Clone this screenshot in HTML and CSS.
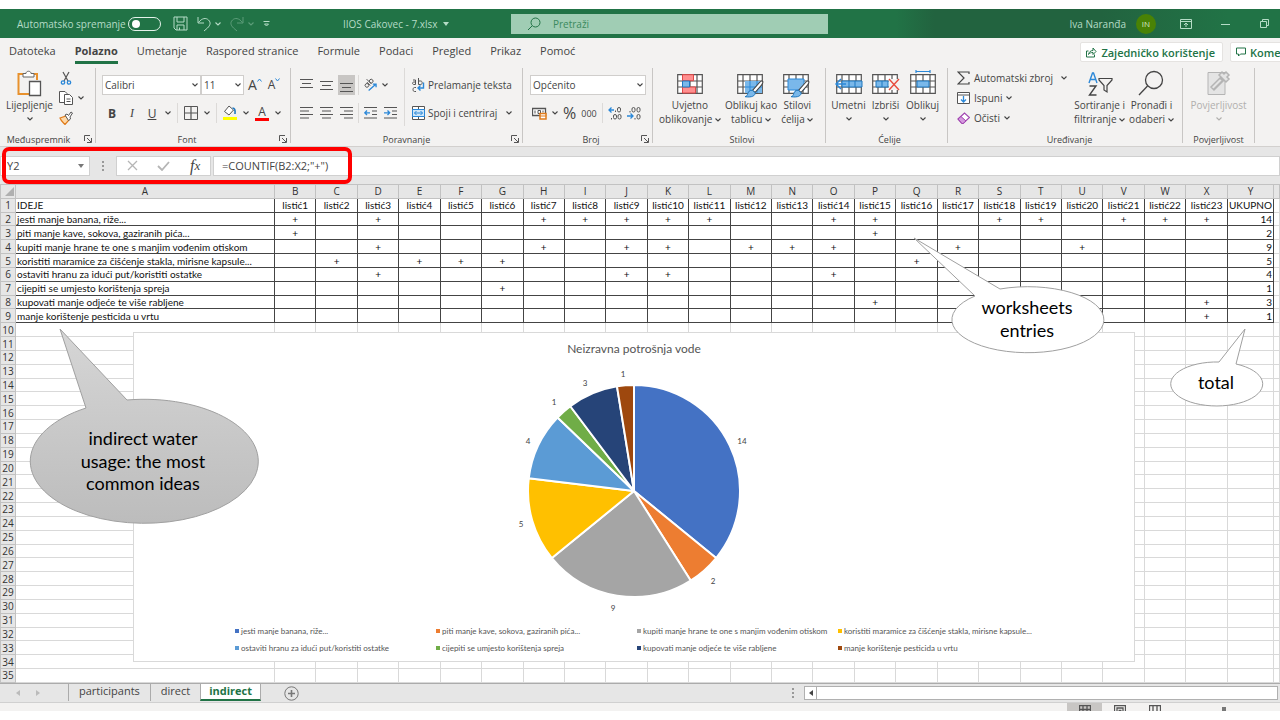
FILE: index.html
```html
<!DOCTYPE html>
<html lang="hr">
<head>
    <meta charset="UTF-8">
    <meta name="viewport" content="width=device-width, initial-scale=1.0">
    <title>IIOS Cakovec - 7.xlsx</title>
    <link rel="stylesheet" href="styles.css">
</head>
<body>
    <!-- Simboli koji se ponavljaju -->
    <svg class="defs" aria-hidden="true">
        <symbol id="chev" viewBox="0 0 6 4"><path d="M.5.5 3 3 5.5.5" fill="none" stroke="currentColor" stroke-width="1.1"/></symbol>
        <symbol id="launch" viewBox="0 0 8 8"><path d="M.5 6V.5H6M3 3l4 4M7.5 3v4.5H3" fill="none" stroke="#555"/></symbol>
        <symbol id="grid" viewBox="0 0 26 20"><path d="M.7.7h24.6v18.6H.7zM.7 7h24.6M.7 13h24.6M6 .7v18.6M13 .7v18.6M20 .7v18.6" fill="#fff" stroke="#555" stroke-width="1.2"/></symbol>
        <symbol id="brush" viewBox="0 0 20 18"><path d="M18.5 1.2c1 .7.5 1.800-1 4L11 12.500 8.500 10.500 15.500 2.500c1.300-1.400 2.200-1.900 3-1.300z" fill="#fff" stroke="#444" stroke-width="1.1"/><path d="M8.300 10.300l2.900 2.400c0 3-3 5-10.200 4 2-.5 2.200-1.300 2.800-3.200.6-2 2.200-3.500 4.500-3.200z" fill="#7ab8ea" stroke="#1f78c0"/></symbol>
    </svg>

    <div class="app">
        <header class="titlebar">
            <div class="quick">
                <label for="autosave">Automatsko spremanje</label>
                <input type="checkbox" id="autosave" class="toggle">
                <button class="save" aria-label="Spremi"><svg width="15" height="15" viewBox="0 0 15 15"><path d="M1 1h13v13H3l-2-2zM4 1v5h7V1M4 14V9h7v5M6.5 11.5v2.5" /></svg></button>
                <button aria-label="Poništi"><svg width="14" height="16" viewBox="0 0 14 16"><path d="M1 1v6h6M1.5 6.5C5 2 9 1.5 11.5 4s2 5-1 8l-3.500 3"/></svg></button>
                <button class="more" aria-label="Više"><svg class="chev"><use href="#chev"/></svg></button>
                <button class="dim" aria-label="Ponovi"><svg width="14" height="16" viewBox="0 0 14 16"><path d="M13 1v6H7M12.5 6.5C9 2 5 1.5 2.5 4s-2 5 1 8L7 15"/></svg></button>
                <button class="dim more" aria-label="Više"><svg class="chev"><use href="#chev"/></svg></button>
                <button class="custom" aria-label="Prilagodi"><svg width="7" height="6" viewBox="0 0 7 6"><path d="M.5.5h6M1.5 3l2 2 2-2z"/></svg></button>
            </div>
            <button class="filename">IIOS Cakovec - 7.xlsx <svg width="6" height="4" viewBox="0 0 6 4"><path d="M0 0h6L3 4z"/></svg></button>
            <div class="search">
                <svg width="14" height="14" viewBox="0 0 14 14"><circle cx="8.5" cy="5.5" r="4.5"/><path d="M5.2 8.8 1 13"/></svg>
                <input type="search" placeholder="Pretraži" aria-label="Pretraži">
            </div>
            <div class="account">
                <span>Iva Naranđa</span>
                <span class="avatar">IN</span>
                <button aria-label="Mogućnosti vrpce"><svg width="12" height="10" viewBox="0 0 12 10"><path d="M.5.5h11v9H.5zM.5 2.5h11M6 8V4M4 6l2-2 2 2"/></svg></button>
                <button aria-label="Minimiziraj"><svg width="10" height="10" viewBox="0 0 10 10"><path d="M0 5.5h9"/></svg></button>
                <button aria-label="Vrati"><svg width="10" height="10" viewBox="0 0 10 10"><path d="M.5 2.5h6v6h-6zM2.5 2.5v-2h6v6h-2"/></svg></button>
            </div>
        </header>

        <nav class="tabs">
            <a href="#">Datoteka</a>
            <a href="#" class="active">Polazno</a>
            <a href="#">Umetanje</a>
            <a href="#">Raspored stranice</a>
            <a href="#">Formule</a>
            <a href="#">Podaci</a>
            <a href="#">Pregled</a>
            <a href="#">Prikaz</a>
            <a href="#">Pomoć</a>
            <button class="share"><svg width="11" height="11" viewBox="0 0 11 11"><path d="M2.5 4H.5v6h8V7.5M2.5 7.5C3 5 4.5 3.5 7 3.5V1l3 3.5-3 3V5.5c-2 0-3.5.5-4.5 2z"/></svg>Zajedničko korištenje</button>
            <button class="comments"><svg width="10" height="10" viewBox="0 0 10 10"><path d="M.5 1h9v6H4.500l-2 2V7h-2z"/></svg>Komentari</button>
        </nav>

        <div class="ribbon">
            <section class="group clipboard">
                <div class="tools">
                    <button class="big"><svg width="26" height="28" viewBox="0 0 26 28"><path d="M6 4H1.500v20H12M17 4h3v6" fill="none" stroke="#e8912d" stroke-width="2"/><path d="M6 7V3.500h3c0-3 5-3 5 0h3V7z" fill="#fff" stroke="#666"/><path d="M12.500 11.500h11v14h-11z" fill="#fff" stroke="#555" stroke-width="1.3"/></svg>
                        <span>Lijepljenje</span><svg class="chev"><use href="#chev"/></svg></button>
                    <div class="stack">
                        <button aria-label="Izreži"><svg width="14" height="14" viewBox="0 0 14 14" fill="none"><path d="M4 1l5 9M10 1L5 10" stroke="#555" stroke-width="1.2"/><circle cx="4" cy="11.5" r="1.7" stroke="#2b88d8" stroke-width="1.3"/><circle cx="10" cy="11.5" r="1.7" stroke="#2b88d8" stroke-width="1.3"/></svg></button>
                        <button aria-label="Kopiraj"><svg width="14" height="14" viewBox="0 0 14 14" fill="#fff" stroke="#555"><path d="M5 11.500H.5V.5H6l2 2V4"/><path d="M5.500 3.500h5l3 3v7h-8zM7.500 8h4M7.500 10.500h4"/></svg><svg class="chev"><use href="#chev"/></svg></button>
                        <button aria-label="Prenositelj oblikovanja"><svg width="14" height="14" viewBox="0 0 14 14"><path d="M1 7l6-2 3 4-4 4.500C4 11.500 2 10 1 7z" fill="#ffd9a8" stroke="#e07b1a" stroke-width="1.2"/><path d="M6 4l2-1 1.500 1.500L12 1l1.500 1-2.500 4 .5 2-2 1.500z" fill="#fff" stroke="#555"/></svg></button>
                    </div>
                </div>
                <h2>Međuspremnik</h2><button class="launch" aria-label="Više postavki"><svg><use href="#launch"/></svg></button>
            </section>

            <section class="group font">
                <div class="tools rows">
                    <div class="row">
                        <span class="select name"><select aria-label="Font"><option>Calibri</option></select><svg class="chev"><use href="#chev"/></svg></span>
                        <span class="select size"><select aria-label="Veličina"><option>11</option></select><svg class="chev"><use href="#chev"/></svg></span>
                        <button class="grow" aria-label="Povećaj font">A<svg width="5" height="4" viewBox="0 0 5 4"><path d="M.5 3.5l2-2.500 2 2.500"/></svg></button>
                        <button class="shrink" aria-label="Smanji font">A<svg width="5" height="4" viewBox="0 0 5 4"><path d="M.5.5l2 2.500 2-2.500"/></svg></button>
                    </div>
                    <div class="row letters">
                        <button class="b">B</button><button class="i">I</button><button class="u">U</button>
                        <svg class="chev"><use href="#chev"/></svg><i class="sep"></i>
                        <button aria-label="Obrubi"><svg width="14" height="14" viewBox="0 0 14 14" fill="none" stroke="#555"><path d="M.5.5h13v13H.5z"/><path d="M7 1v12M1 7h12" stroke-width="1.2"/></svg></button>
                        <svg class="chev"><use href="#chev"/></svg><i class="sep"></i>
                        <button aria-label="Boja ispune"><svg width="14" height="16" viewBox="0 0 14 16"><path d="M6 1L1.500 6.500 6 10l4.500-5z" fill="#fff" stroke="#555"/><path d="M9.500 3c2 0 3 1.500 2.500 6" fill="none" stroke="#1f78c0" stroke-width="1.6"/><path d="M0 12h14v3H0z" fill="#ff0"/></svg></button>
                        <svg class="chev"><use href="#chev"/></svg>
                        <button class="fontcolor">A</button>
                        <svg class="chev"><use href="#chev"/></svg>
                    </div>
                </div>
                <h2>Font</h2><button class="launch" aria-label="Više postavki"><svg><use href="#launch"/></svg></button>
            </section>

            <section class="group align">
                <div class="tools">
                    <div class="rows">
                        <div class="row lines">
                            <button aria-label="Gore"><svg viewBox="0 0 13 14"><path d="M0 1.500h13M2 5.500h9M0 9.500h13"/></svg></button>
                            <button aria-label="Sredina"><svg viewBox="0 0 13 14"><path d="M0 3.500h13M2 7.500h9M0 11.500h13"/></svg></button>
                            <button class="on" aria-label="Dolje"><svg viewBox="0 0 13 14"><path d="M0 5.500h13M2 9.500h9M0 13.500h13"/></svg></button>
                            <i class="sep"></i>
                            <button aria-label="Orijentacija"><svg viewBox="0 0 14 14"><g transform="rotate(-45 6 6)" stroke="#555"><circle cx="3" cy="5" r="2"/><path d="M5.500 2.500v5M7.500 0v7.500"/><circle cx="9.500" cy="5" r="2"/></g><path d="M5 13l8-7M9.500 6H13v3.500" stroke="#2b88d8" stroke-width="1.4"/></svg></button>
                            <svg class="chev"><use href="#chev"/></svg>
                        </div>
                        <div class="row lines">
                            <button aria-label="Lijevo"><svg viewBox="0 0 13 14"><path d="M0 1.500h13M0 5h9M0 8.500h13M0 12h9"/></svg></button>
                            <button aria-label="Centar"><svg viewBox="0 0 13 14"><path d="M0 1.500h13M2 5h9M0 8.500h13M2 12h9"/></svg></button>
                            <button aria-label="Desno"><svg viewBox="0 0 13 14"><path d="M0 1.500h13M4 5h9M0 8.500h13M4 12h9"/></svg></button>
                            <i class="sep"></i>
                            <button aria-label="Smanji uvlaku"><svg viewBox="0 0 13 14"><path d="M0 1.500h13M8 5h5M8 8.500h5M0 12h13"/><path d="M6 6.800H.8M3 4.500L.8 6.800 3 9" stroke="#2b88d8" stroke-width="1.3"/></svg></button>
                            <button aria-label="Povećaj uvlaku"><svg viewBox="0 0 13 14"><path d="M0 1.500h13M8 5h5M8 8.500h5M0 12h13"/><path d="M0 6.800h5.500M3.500 4.500l2.200 2.300L3.500 9" stroke="#2b88d8" stroke-width="1.3"/></svg></button>
                        </div>
                    </div>
                    <div class="rows wrap">
                        <button class="row"><svg width="13" height="14" viewBox="0 0 13 14" fill="none" stroke="#555"><path d="M1 2h2.500v4.500M3.500 4H2C0 4 0 6.500 2 6.500h1.500M6.500 0v6.500h2.200c2 0 2-3.500 0-3.500H6.500M4 9.500H2.500c-2 0-2 4 0 4H4"/><path d="M11.500 4.500V10H6M8.500 7.500L6 10l2.500 2.500" stroke="#2b88d8" stroke-width="1.4"/></svg>Prelamanje teksta</button>
                        <button class="row merge"><svg width="13" height="14" viewBox="0 0 13 14" fill="#fff" stroke="#555"><path d="M.5.5h12v13H.5zM6.500.5v13"/><path d="M.5 3.500h12v7H.5z" fill="#cfe6f8" stroke="#2b88d8"/><path d="M2.500 7h8M4.500 5l-2 2 2 2M8.500 5l2 2-2 2" fill="none" stroke="#2b88d8"/></svg>Spoji i centriraj<svg class="chev"><use href="#chev"/></svg></button>
                    </div>
                </div>
                <h2>Poravnanje</h2><button class="launch" aria-label="Više postavki"><svg><use href="#launch"/></svg></button>
            </section>

            <section class="group number">
                <div class="tools rows">
                    <div class="row"><span class="select format"><select aria-label="Oblik broja"><option>Općenito</option></select><svg class="chev"><use href="#chev"/></svg></span></div>
                    <div class="row digits">
                        <button aria-label="Računovodstveni oblik"><svg width="15" height="13" viewBox="0 0 15 13"><path d="M.5 1.500h13v7H.5z" fill="#fff" stroke="#555" stroke-width="1.3"/><path d="M3 3.500v3M6 3.500h2.500v3H6zM11 3.500v2" fill="none" stroke="#555"/><path d="M8 6.500h6v5.500H8z" fill="#fff" stroke="#e07b1a" stroke-width="1.5"/><path d="M8 9h6" stroke="#e07b1a"/></svg></button>
                        <svg class="chev"><use href="#chev"/></svg>
                        <button class="percent">%</button>
                        <button class="thousand">000</button>
                        <i class="sep"></i>
                        <button class="dec" aria-label="Povećaj decimalno"><svg width="14" height="14" viewBox="0 0 14 14"><path d="M6 4H1M3.500 1.500L1 4l2.500 2.500" stroke="#2b88d8" stroke-width="1.3"/><path d="M7.500 4.500V6"/><rect x="9.500" y="1.500" width="3" height="4.500" rx="1.500"/><path d="M3.500 12v1.500"/><rect x="5.500" y="8.500" width="3" height="4.500" rx="1.500"/><rect x="10" y="8.500" width="3" height="4.500" rx="1.500"/></svg></button>
                        <button class="dec" aria-label="Smanji decimalno"><svg width="14" height="14" viewBox="0 0 14 14"><path d="M0 10h6M3.500 7.500L6 10l-2.500 2.500" stroke="#2b88d8" stroke-width="1.3"/><path d="M3 5v1.500"/><rect x="5" y="1.500" width="3" height="4.500" rx="1.500"/><rect x="10" y="1.500" width="3" height="4.500" rx="1.500"/><path d="M8 12v1.500"/><rect x="10" y="8.500" width="3" height="4.500" rx="1.500"/></svg></button>
                    </div>
                </div>
                <h2>Broj</h2><button class="launch" aria-label="Više postavki"><svg><use href="#launch"/></svg></button>
            </section>

            <section class="group styles">
                <div class="tools">
                    <button class="big"><svg width="26" height="28" viewBox="0 -4 26 28"><use href="#grid" width="26" height="20"/><path d="M5.500.7h11v6h-11zM5.500 13h13v6h-13z" fill="#ff8f8f" stroke="#e04848"/><path d="M5.500 7h7v6h-7z" fill="#7ab8ea" stroke="#1f78c0"/></svg>
                        <span>Uvjetno<br>oblikovanje <svg class="chev"><use href="#chev"/></svg></span></button>
                    <button class="big"><svg width="28" height="28" viewBox="0 -4 28 28"><use href="#grid" width="26" height="20"/><path d="M8 7h17v12H8z" fill="#7ab8ea"/><path d="M8 13h17M13 7v12M20 7v12" stroke="#2b88d8"/><use href="#brush" x="7" y="6" width="20" height="18"/></svg>
                        <span>Oblikuj kao<br>tablicu <svg class="chev"><use href="#chev"/></svg></span></button>
                    <button class="big"><svg width="28" height="28" viewBox="0 -4 28 28"><use href="#grid" width="26" height="20"/><path d="M5 5h16v11H5z" fill="#7ab8ea" stroke="#2b88d8"/><use href="#brush" x="7" y="6" width="20" height="18"/></svg>
                        <span>Stilovi<br>ćelija <svg class="chev"><use href="#chev"/></svg></span></button>
                </div>
                <h2>Stilovi</h2>
            </section>

            <section class="group cells">
                <div class="tools">
                    <button class="big"><svg width="28" height="28" viewBox="0 -4 28 28"><use href="#grid" x="1" width="26" height="20"/><path d="M7 7h20v6H7z" fill="#7ab8ea" stroke="#1f78c0"/><path d="M14 7v6M20 7v6" stroke="#1f78c0"/><path d="M11 10H1M6 5l-5 5 5 5" fill="none" stroke="#2b88d8" stroke-width="1.5"/></svg>
                        <span>Umetni</span><svg class="chev"><use href="#chev"/></svg></button>
                    <button class="big"><svg width="28" height="28" viewBox="0 -4 28 28"><use href="#grid" width="26" height="20"/><path d="M4 7h12v6H4z" fill="#7ab8ea" stroke="#1f78c0"/><path d="M10 7v6" stroke="#1f78c0"/><path d="M17 5h10v11H17z" fill="#f3f2f1"/><path d="M17 5l10 11M27 5L17 16" stroke="#e84c3d" stroke-width="1.4"/></svg>
                        <span>Izbriši</span><svg class="chev"><use href="#chev"/></svg></button>
                    <button class="big"><svg width="26" height="28" viewBox="0 -4 26 28"><use href="#grid" width="26" height="20"/><path d="M7 7h12v6H7z" fill="#7ab8ea" stroke="#1f78c0"/><path d="M6 -2.500h14M6 -4v3M20 -4v3" stroke="#2b88d8" stroke-width="1.2"/></svg>
                        <span>Oblikuj</span><svg class="chev"><use href="#chev"/></svg></button>
                </div>
                <h2>Ćelije</h2>
            </section>

            <section class="group editing">
                <div class="tools">
                    <div class="list">
                        <button class="sum"><svg width="13" height="14" viewBox="0 0 13 14" fill="none" stroke="#444" stroke-width="1.2"><path d="M12 3V1H1l6 6-6 6h11v-2"/></svg>Automatski zbroj<svg class="chev"><use href="#chev"/></svg></button>
                        <button><svg width="13" height="12" viewBox="0 0 13 12"><path d="M.5.5h12v11H.5zM.5 3h12" fill="#fff" stroke="#555"/><path d="M6.500 4v6M4 7.500L6.500 10 9 7.500" fill="none" stroke="#2b88d8" stroke-width="1.3"/></svg>Ispuni <svg class="chev"><use href="#chev"/></svg></button>
                        <button><svg width="13" height="12" viewBox="0 0 13 12"><path d="M1 7l6.500-6 5 4.500-6.500 6H5z" fill="#fff" stroke="#a045b0" stroke-width="1.2"/><path d="M1 7l3-2.500 5 4.500-3 2.500H5z" fill="#d59ade" stroke="#a045b0"/></svg>Očisti <svg class="chev"><use href="#chev"/></svg></button>
                    </div>
                    <button class="big"><svg width="26" height="28" viewBox="0 0 26 28" fill="none"><path d="M2 13L5.500 3h1L10 13M3.500 9.500h5" stroke="#2b88d8" stroke-width="1.4"/><path d="M2.500 16H9L2.500 25h7" stroke="#444" stroke-width="1.4"/><path d="M12 8.500h13V10l-5 5.500V22l-3-2v-4.500L12 10z" stroke="#444" stroke-width="1.2"/></svg>
                        <span>Sortiranje i<br>filtriranje <svg class="chev"><use href="#chev"/></svg></span></button>
                    <button class="big"><svg width="26" height="28" viewBox="0 0 26 28" fill="none" stroke="#444" stroke-width="1.3"><circle cx="16" cy="10" r="8.500"/><path d="M9.500 16L1 25"/></svg>
                        <span>Pronađi i<br>odaberi <svg class="chev"><use href="#chev"/></svg></span></button>
                </div>
                <h2>Uređivanje</h2>
            </section>

            <section class="group privacy">
                <div class="tools">
                    <button class="big" disabled><svg width="24" height="28" viewBox="0 0 24 28" fill="#e4e4e4" stroke="#b4b4b4"><path d="M1 2.500h17v22H1z"/><path d="M4 17l9-9 3 3-9 9zM7 19l8-8M12 5l3-3 2 2 2-2 3 3-2 2 2 2-3 3z" stroke-width="1.5"/></svg>
                        <span>Povjerljivost</span><svg class="chev"><use href="#chev"/></svg></button>
                </div>
                <h2>Povjerljivost</h2>
            </section>
        </div>

        <div class="formulabar">
            <div class="namebox"><input type="text" value="Y2" aria-label="Okvir naziva"><svg width="6" height="4" viewBox="0 0 6 4"><path d="M0 0h6L3 4z" fill="#777"/></svg></div>
            <i class="dots"></i>
            <div class="fx">
                <button aria-label="Odustani"><svg width="11" height="11" viewBox="0 0 11 11"><path d="M1 1l9 9M10 1l-9 9" stroke="#b5b5b5" stroke-width="1.3"/></svg></button>
                <button aria-label="Unesi"><svg width="13" height="10" viewBox="0 0 13 10"><path d="M1 5l4 4 7-8" fill="none" stroke="#b5b5b5" stroke-width="1.8"/></svg></button>
                <button class="fn"><i>f</i>x</button>
            </div>
            <input type="text" class="formula" value='=COUNTIF(B2:X2;"+")' aria-label="Formula">
            <div class="highlight"></div>
        </div>

        <main class="sheet">
            <table id="grid-table"></table>

            <figure class="chart">
                <figcaption>Neizravna potrošnja vode</figcaption>
                <svg id="pie" width="260" height="250" viewBox="-130 -125 260 250"></svg>
                <ul id="legend"></ul>
            </figure>

            <!-- Oblačići s napomenama -->
            <svg class="callout ideas" width="232" height="198" viewBox="0 0 232 198">
                <defs><linearGradient id="gray" x2="0" y2="1"><stop stop-color="#d6d6d6"/><stop offset="1" stop-color="#bcbcbc"/></linearGradient></defs>
                <path d="M58 80L32 1l67 71A114 62 0 1 1 58 80z" fill="url(#gray)"/>
                <text x="115" y="117">indirect water</text><text x="115" y="140">usage: the most</text><text x="115" y="162">common ideas</text>
            </svg>
            <svg class="callout entries" width="192" height="118" viewBox="0 0 192 118">
                <path d="M62 59L1 1l86 51A76 33 0 1 1 62 59z" fill="#fff"/>
                <text x="114" y="77">worksheets</text><text x="114" y="100">entries</text>
            </svg>
            <svg class="callout sum" width="96" height="80" viewBox="0 0 96 80">
                <path d="M50 34L76 1l-9 35A46 22 0 1 1 50 34z" fill="#fff"/>
                <text x="47" y="61">total</text>
            </svg>
        </main>

        <div class="sheetbar">
            <button class="arrow" aria-label="Prethodni list"><svg width="4" height="6" viewBox="0 0 4 6"><path d="M4 0v6L0 3z"/></svg></button>
            <button class="arrow" aria-label="Sljedeći list"><svg width="4" height="6" viewBox="0 0 4 6"><path d="M0 0v6l4-3z"/></svg></button>
            <nav><a href="#">participants</a><a href="#">direct</a><a href="#" class="active">indirect</a></nav>
            <button class="add" aria-label="Novi list"><svg width="15" height="15" viewBox="0 0 15 15"><circle cx="7.500" cy="7.500" r="6.700" fill="none" stroke="#777"/><path d="M7.500 4v7M4 7.500h7" stroke="#777" stroke-width="1.6"/></svg></button>
            <i class="dots"></i>
            <div class="scroll"><button aria-label="Pomakni lijevo"><svg width="4" height="6" viewBox="0 0 4 6"><path d="M4 0v6L0 3z" fill="#444"/></svg></button></div>
        </div>
        <footer class="status">
            <button class="on" aria-label="Normalno"><svg width="12" height="10" viewBox="0 0 12 10"><path d="M.5.5h11v9H.5zM0 4.500h12M4 0v10M8 0v10"/></svg></button>
            <button aria-label="Raspored"><svg width="12" height="10" viewBox="0 0 12 10"><path d="M.5.5h11v9H.5zM3 3h6v6H3zM4.500 5.500h3"/></svg></button>
            <button aria-label="Prijelomi"><svg width="12" height="10" viewBox="0 0 12 10"><path d="M.5 10V.5h11V10M4 0v7M8 0v7"/></svg></button>
            <i class="zoom"></i>
        </footer>
    </div>
    <script src="script.js"></script>
</body>
</html>
```

FILE: styles.css
```css
* {
    box-sizing: border-box;
}
body {
    margin: 0;
    font-family: "Open Sans", "Noto Sans", sans-serif;
    font-size: 10px;
    color: #444;
    background: #fff;
    overflow: hidden;
}
button, input, select {
    font: inherit;
    color: inherit;
    background: none;
    border: none;
    padding: 0;
    margin: 0;
}
button {
    display: inline-flex;
    align-items: center;
    justify-content: center;
    white-space: nowrap;
}
a {
    color: inherit;
    text-decoration: none;
}
svg {
    flex: none;
}
.defs {
    position: absolute;
    width: 0;
    height: 0;
}
.chev {
    width: 6px;
    height: 4px;
}
.app {
    min-height: 100vh;
    padding: 9px 0;
    display: flex;
    flex-direction: column;
}

/* Naslovna traka */
.titlebar {
    height: 29px;
    display: grid;
    grid-template-columns: 343px 168px minmax(100px, 317px) 1fr;
    align-items: center;
    color: #b5dcc6;
    background: linear-gradient(90deg, #217346 70%, #22633f 73%, #22633f 86%, #217346 96%);
}
.titlebar button svg {
    fill: none;
    stroke: currentColor;
}
.quick {
    display: flex;
    align-items: center;
    padding-left: 17px;
}
.quick label {
    width: 111px;
    white-space: nowrap;
}
.toggle {
    appearance: none;
    width: 33px;
    height: 14px;
    border: 1px solid #e4f2ea;
    border-radius: 7px;
    margin-right: 12px;
}
.toggle::before {
    content: "";
    display: block;
    width: 8px;
    height: 8px;
    margin: 2px 3px;
    border-radius: 4px;
    background: #fff;
}
.quick button {
    margin-right: 4px;
}
.quick .save, .quick .more {
    margin-right: 9px;
}
.quick .dim {
    opacity: .4;
}
.filename {
    justify-self: start;
    gap: 5px;
}
.titlebar .filename svg {
    fill: currentColor;
    stroke: none;
}
.search {
    height: 20px;
    display: flex;
    align-items: center;
    gap: 12px;
    padding-left: 16px;
    background: #a0cdb4;
    color: #217346;
}
.search svg {
    fill: none;
    stroke: #217346;
}
.search input {
    flex: 1;
    outline: none;
}
.search input::placeholder {
    color: #3b8a5e;
}
.account {
    display: flex;
    align-items: center;
    justify-content: flex-end;
    padding-right: 10px;
}
.avatar {
    width: 20px;
    height: 20px;
    margin: 0 24px 0 10px;
    border-radius: 50%;
    background: #498205;
    color: #d5e8c0;
    font-size: 8px;
    line-height: 20px;
    text-align: center;
}
.account button + button {
    margin-left: 29px;
}

/* Kartice vrpce */
.tabs {
    height: 28px;
    display: flex;
    align-items: center;
    gap: 19px;
    padding-left: 9px;
    background: #f3f2f1;
    font-size: 11px;
    white-space: nowrap;
    overflow: hidden;
}
.tabs a {
    line-height: 20px;
    border-bottom: 3px solid transparent;
}
.tabs .active {
    font-weight: bold;
    border-color: #217346;
}
.tabs button {
    height: 20px;
    gap: 4px;
    padding: 0 7px 0 5px;
    border: 1px solid #e5e3e1;
    border-radius: 2px;
    background: #fff;
    color: #217346;
    font-weight: 600;
}
.tabs button svg {
    fill: none;
    stroke: #217346;
}
.share {
    margin-left: auto;
}
.tabs .comments {
    width: 80px;
    justify-content: flex-start;
    margin: 0 -30px 0 -12px;
}

/* Vrpca */
.ribbon {
    height: 81px;
    display: flex;
    background: #f3f2f1;
    border-bottom: 1px solid #d2d0ce;
    overflow: hidden;
}
.group {
    position: relative;
    display: flex;
    flex-direction: column;
    flex: none;
    margin: 2px 0 3px;
    border-right: 1px solid #c8c6c4;
}
.group h2 {
    margin: 0;
    font-size: 9px;
    font-weight: normal;
    line-height: 12px;
    text-align: center;
}
.launch {
    position: absolute;
    right: 3px;
    bottom: 0;
}
.launch svg {
    width: 8px;
    height: 8px;
}
.tools {
    flex: none;
    height: 66px;
    display: flex;
}
.rows {
    display: flex;
    flex-direction: column;
    gap: 6px;
    padding-top: 6px;
}
.row {
    display: flex;
    align-items: center;
    height: 22px;
}
.big {
    flex-direction: column;
    justify-content: flex-start;
    padding-top: 2px;
    line-height: 14px;
}
.big > .chev {
    margin-top: 5px;
}
.big .chev {
    vertical-align: 1px;
}
.big:disabled {
    color: #b1afad;
}
.sep {
    width: 1px;
    height: 20px;
    background: #dcdad8;
}
.select {
    position: relative;
    display: flex;
    align-items: center;
    height: 20px;
    border: 1px solid #d0cecc;
    background: #fff;
}
.select select {
    appearance: none;
    width: 100%;
    padding-left: 2px;
    outline: none;
}
.select .chev {
    position: absolute;
    right: 2px;
}
.clipboard {
    width: 96px;
}
.clipboard .big {
    width: 59px;
}
.clipboard h2 {
    padding-right: 18px;
}
.stack {
    display: flex;
    flex-direction: column;
    align-items: flex-start;
    gap: 6px;
    padding-top: 3px;
}
.stack button {
    gap: 5px;
}
.font {
    width: 195px;
    padding-left: 6px;
}
.font h2 {
    padding-right: 18px;
}
.font .name {
    width: 99px;
}
.font .size {
    width: 43px;
}
.grow, .shrink {
    align-items: flex-start;
    line-height: 14px;
}
.grow {
    font-size: 14px;
    margin: 0 6px 0 4px;
}
.shrink {
    font-size: 12px;
}
.grow svg, .shrink svg {
    fill: none;
    stroke: #2b88d8;
}
.letters {
    gap: 6px;
    padding-left: 3px;
    font-size: 12px;
}
.letters > button {
    width: 14px;
}
.b {
    font-weight: bold;
}
.i {
    font-style: italic;
    font-family: "Liberation Serif", serif;
}
.letters .u {
    text-decoration: underline;
}
.letters .fontcolor {
    height: 16px;
    line-height: 12px;
    border-bottom: 3px solid #f00;
}
.align {
    width: 232px;
}
.align .tools > .rows:first-child {
    width: 113px;
    padding-left: 7px;
}
.lines {
    gap: 3px;
}
.lines button {
    width: 17px;
    height: 20px;
}
.lines button svg {
    width: 13px;
    height: 14px;
    fill: none;
    stroke: #555;
}
.lines .on, .status .on {
    background: #c8c6c4;
}
.wrap {
    padding-left: 7px;
    border-left: 1px solid #dcdad8;
    height: 58px;
}
.wrap .row {
    gap: 3px;
    justify-content: flex-start;
}
.wrap .chev {
    margin-left: 6px;
}
.number {
    width: 130px;
    padding-left: 7px;
}
.format {
    width: 116px;
}
.digits {
    gap: 5px;
    padding-left: 2px;
}
.percent {
    font-size: 16px;
}
.thousand {
    font-size: 9px;
}
.dec svg {
    fill: none;
    stroke: #555;
}
.styles {
    width: 173px;
    padding-left: 6px;
}
.styles .tools, .cells .tools {
    gap: 4px;
}
.cells {
    width: 122px;
    padding-left: 6px;
}
.cells .big {
    width: 33px;
}
.editing {
    width: 235px;
    padding-left: 9px;
}
.editing .tools {
    gap: 4px;
}
.list {
    width: 113px;
    display: flex;
    flex-direction: column;
    align-items: flex-start;
}
.list button {
    height: 20px;
    gap: 4px;
}
.list .sum .chev {
    margin-left: 4px;
}
.privacy {
    width: 72px;
}
.privacy .big {
    width: 100%;
}

/* Traka formule */
.formulabar {
    position: relative;
    height: 37px;
    display: flex;
    align-items: center;
    background: #e6e6e6;
    font-size: 11px;
}
.namebox {
    width: 90px;
    height: 20px;
    display: flex;
    align-items: center;
    padding: 0 5px 0 6px;
    background: #fff;
    border: 1px solid #d0d0d0;
}
.namebox input {
    flex: 1;
    min-width: 0;
}
.dots {
    width: 2px;
    height: 10px;
    margin: 0 12px;
    background: repeating-linear-gradient(#999 0 2px, transparent 2px 4px);
}
.fx {
    width: 95px;
    height: 20px;
    display: flex;
    justify-content: space-around;
    background: #fff;
    border: 1px solid #d0d0d0;
}
.fn {
    font-family: "Liberation Serif", serif;
    font-style: italic;
    font-size: 13px;
}
.fn i {
    font-size: 16px;
}
.formula {
    flex: 1;
    height: 20px;
    margin-left: 2px;
    padding-left: 8px;
    background: #fff;
    border: 1px solid #d0d0d0;
}
.highlight {
    position: absolute;
    left: 2px;
    top: 0;
    width: 350px;
    height: 37px;
    border: 4px solid #f00;
    border-radius: 7px;
    pointer-events: none;
}

/* Radni list */
.sheet {
    position: relative;
    flex: 1;
    display: grid;
    overflow: hidden;
}
#grid-table {
    width: 100%;
    table-layout: fixed;
    border-collapse: collapse;
    font-family: Lato, "Open Sans", sans-serif;
    font-size: 10px;
    line-height: 12px;
    color: #111;
}
#grid-table th, #grid-table td {
    padding: 0;
    border: 1px solid #d9d9d9;
    text-align: center;
    font-weight: normal;
    white-space: nowrap;
}
#grid-table th {
    background: #e6e6e6;
    border-color: #c2c2c2;
    color: #333;
    font-family: "Open Sans", sans-serif;
}
#grid-table .data td {
    border-color: #444;
}
#grid-table .data .idea {
    text-align: left;
    padding-left: 1px;
}
#grid-table .data .total {
    text-align: right;
    padding-right: 1px;
}
#grid-table .data .rest {
    border-color: #d9d9d9;
}
.rownum {
    width: 15px;
}
.ideacol {
    width: 259px;
}
.totalcol {
    width: 46px;
}
.restcol {
    width: 6px;
}
.corner {
    display: block;
    width: 0;
    margin-left: 4px;
    border-left: 9px solid transparent;
    border-bottom: 9px solid #b0b0b0;
}
.chart {
    position: absolute;
    left: 133px;
    top: 148px;
    width: 1002px;
    margin: 0;
    padding-top: 8px;
    display: flex;
    flex-direction: column;
    align-items: center;
    background: #fff;
    border: 1px solid #d9d9d9;
    font-family: Lato, sans-serif;
    color: #555;
}
.chart figcaption {
    font-size: 12px;
    line-height: 16px;
}
#pie {
    margin-top: 9px;
}
#pie path {
    stroke: #fff;
    stroke-width: 2;
    stroke-linejoin: round;
}
#pie text {
    font-size: 8px;
    text-anchor: middle;
    fill: #444;
}
#legend {
    width: 804px;
    margin: 7px 0 4px 6px;
    padding: 0;
    display: grid;
    grid-template-columns: repeat(4, 1fr);
    list-style: none;
    font-size: 8px;
    line-height: 17px;
    white-space: nowrap;
}
#legend i {
    display: inline-block;
    width: 4px;
    height: 4px;
    margin-right: 2px;
    vertical-align: 1px;
}
.callout {
    position: absolute;
}
.callout path {
    stroke: #a0a0a0;
}
.callout text {
    font: 18px Lato, sans-serif;
    text-anchor: middle;
    fill: #000;
}
.ideas {
    left: 28px;
    top: 144px;
}
.entries {
    left: 913px;
    top: 53px;
}
.callout.sum {
    left: 1169px;
    top: 144px;
}

/* Kartice listova */
.sheetbar {
    height: 20px;
    display: flex;
    align-items: center;
    background: #e6e6e6;
    border-top: 1px solid #ababab;
    border-bottom: 1px solid #d0d0d0;
    font-size: 11px;
}
.arrow {
    margin-left: 16px;
    fill: #bbb;
}
.sheetbar nav {
    display: flex;
    align-self: flex-start;
    margin-left: 28px;
}
.sheetbar nav a {
    padding: 0 10px;
    line-height: 14px;
    height: 17px;
    border-left: 1px solid #ababab;
}
.sheetbar nav .active {
    padding: 0 8px;
    background: #fff;
    color: #217346;
    font-weight: bold;
    border-right: 1px solid #ababab;
    border-bottom: 2px solid #217346;
}
.add {
    margin-left: 23px;
}
.sheetbar .dots {
    margin-left: auto;
    margin-right: 10px;
}
.scroll {
    width: 37%;
    height: 14px;
    margin-right: 2px;
    display: flex;
    background: #fff;
    border: 1px solid #b0b0b0;
}
.scroll button {
    width: 12px;
    border-right: 1px solid #b0b0b0;
}
.status {
    height: 8px;
    display: flex;
    align-items: flex-start;
    justify-content: flex-end;
    padding-right: 54px;
    background: #f3f2f1;
    overflow: hidden;
}
.status button {
    width: 35px;
    padding-top: 2px;
}
.status svg {
    fill: none;
    stroke: #555;
    stroke-width: 1.3;
}
.zoom {
    width: 4px;
    height: 10px;
    margin: 4px 0 0 50px;
    background: #777;
}
```

FILE: script.js
```js
const stupci = 'ABCDEFGHIJKLMNOPQRSTUVWXY'.split('');

const ideje = [
    { naziv: 'jesti manje banana, riže...', plus: 'BDHIJKLOPSTVWX', ukupno: 14, boja: '#4472c4', oznaka: [108, -47] },
    { naziv: 'piti manje kave, sokova, gaziranih pića...', plus: 'BP', ukupno: 2, boja: '#ed7d31', oznaka: [79, 93] },
    { naziv: 'kupiti manje hrane te one s manjim vođenim otiskom', plus: 'DHJKMNORU', ukupno: 9, boja: '#a5a5a5', oznaka: [-21, 120] },
    { naziv: 'koristiti maramice za čišćenje stakla, mirisne kapsule...', plus: 'CEFGQ', ukupno: 5, boja: '#ffc000', oznaka: [-113, 36] },
    { naziv: 'ostaviti hranu za idući put/koristiti ostatke', plus: 'DJKO', ukupno: 4, boja: '#5b9bd5', oznaka: [-106, -47] },
    { naziv: 'cijepiti se umjesto korištenja spreja', plus: 'G', ukupno: 1, boja: '#70ad47', oznaka: [-80, -86] },
    { naziv: 'kupovati manje odjeće te više rabljene', plus: 'PX', ukupno: 3, boja: '#264478', oznaka: [-49, -105] },
    { naziv: 'manje korištenje pesticida u vrtu', plus: 'X', ukupno: 1, boja: '#9e480e', oznaka: [-11, -114] }
];

function celija(red, stupac, i) {
    if (red > 9) return '<td></td>';
    const ideja = ideje[red - 2];
    if (stupac === 'A') return `<td class="idea">${ideja ? ideja.naziv : 'IDEJE'}</td>`;
    if (stupac === 'Y') return ideja ? `<td class="total">${ideja.ukupno}</td>` : '<td>UKUPNO</td>';
    if (!ideja) return `<td>listić${i}</td>`;
    return `<td>${ideja.plus.includes(stupac) ? '+' : ''}</td>`;
}

function nacrtajTablicu() {
    let html = '<colgroup><col class="rownum"><col class="ideacol"><col span="23"><col class="totalcol"><col class="restcol"></colgroup>';
    html += '<tr><th><span class="corner"></span></th>' + stupci.map(s => `<th>${s}</th>`).join('') + '<th></th></tr>';
    for (let red = 1; red <= 35; red++) {
        html += `<tr class="${red <= 9 ? 'data' : ''}"><th>${red}</th>`;
        html += stupci.map((s, i) => celija(red, s, i)).join('');
        html += '<td class="rest"></td></tr>';
    }
    document.getElementById('grid-table').innerHTML = html;
}

function nacrtajGraf() {
    const r = 106;
    const zbroj = ideje.reduce((z, ideja) => z + ideja.ukupno, 0);
    let kut = 0;
    let isjecci = '';
    ideje.forEach(ideja => {
        const kraj = kut + ideja.ukupno / zbroj * 2 * Math.PI;
        isjecci += `<path fill="${ideja.boja}" d="M0 0L${r * Math.sin(kut)} ${-r * Math.cos(kut)}A${r} ${r} 0 0 1 ${r * Math.sin(kraj)} ${-r * Math.cos(kraj)}z"/>`;
        isjecci += `<text x="${ideja.oznaka[0]}" y="${ideja.oznaka[1]}">${ideja.ukupno}</text>`;
        kut = kraj;
    });
    document.getElementById('pie').innerHTML = isjecci;
    document.getElementById('legend').innerHTML = ideje.map(ideja =>
        `<li><i style="background:${ideja.boja}"></i>${ideja.naziv}</li>`).join('');
}

nacrtajTablicu();
nacrtajGraf();
```
